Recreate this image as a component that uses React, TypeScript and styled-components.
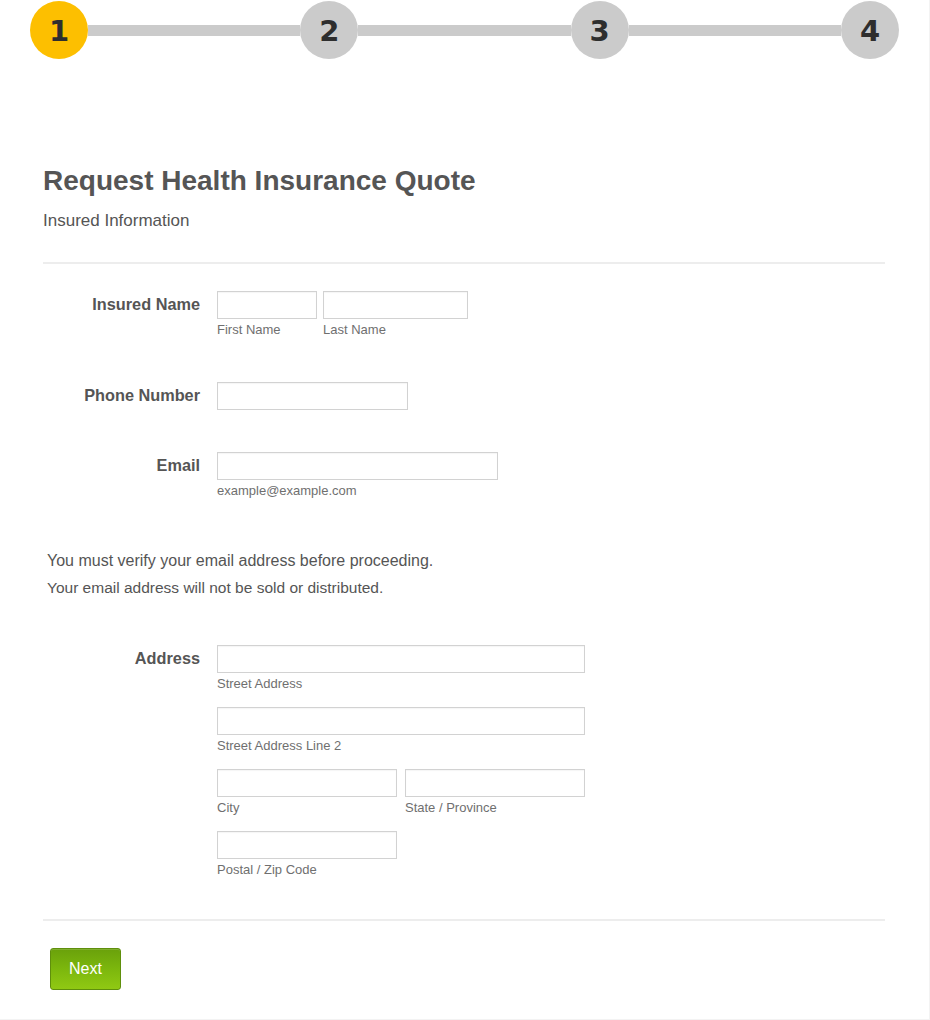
import React from "react";
import styled, { createGlobalStyle } from "styled-components";

const Global = createGlobalStyle`
  html, body { margin: 0; padding: 0; background: #fff; }
  body { font-family: "Liberation Sans", Arial, sans-serif; color: #555; }
  * { box-sizing: border-box; }
`;

const Page = styled.div`
  width: 930px;
  height: 1020px;
  border-right: 1px solid #f3f3f3;
  border-bottom: 1px solid #f3f3f3;
  background: #fff;
`;

const Steps = styled.div`
  display: flex;
  align-items: center;
  padding: 0 30px;
  height: 60px;
`;

const Circle = styled.div<{ $active?: boolean }>`
  width: 58px;
  height: 58px;
  border-radius: 50%;
  flex: none;
  background: ${(p) => (p.$active ? "#fdbf00" : "#cbcbcb")};
  color: #2e2e2e;
  display: flex;
  align-items: center;
  justify-content: center;
  font-family: "DejaVu Sans", Verdana, sans-serif;
  font-weight: bold;
  font-size: 29px;
  padding-top: 2px;
`;

const Connector = styled.div`
  flex: 1;
  height: 11px;
  background: #cbcbcb;
`;

const Form = styled.div`
  padding: 0 44px 0 43px;
`;

const Title = styled.h1`
  margin: 105px 0 0 0;
  font-size: 28px;
  line-height: 32px;
  font-weight: bold;
  color: #555;
`;

const Subtitle = styled.div`
  margin-top: 14px;
  font-size: 17px;
  line-height: 20px;
  color: #555;
`;

const Divider = styled.hr<{ $top: number }>`
  margin: ${(p) => p.$top}px 0 0 0;
  border: 0;
  border-top: 2px solid #ededed;
  height: 0;
`;

const Row = styled.div<{ $top: number }>`
  display: grid;
  grid-template-columns: 157px 1fr;
  column-gap: 17px;
  margin-top: ${(p) => p.$top}px;
`;

const Label = styled.div`
  text-align: right;
  font-weight: bold;
  font-size: 16.3px;
  line-height: 20px;
  padding-top: 3px;
  color: #555;
`;

const Fields = styled.div`
  display: flex;
  flex-direction: column;
  gap: 15px;
`;

const FieldLine = styled.div<{ $gap?: number }>`
  display: flex;
  gap: ${(p) => p.$gap ?? 8}px;
`;

const Field = styled.div`
  display: flex;
  flex-direction: column;
`;

const Input = styled.input<{ $w: number }>`
  width: ${(p) => p.$w}px;
  height: 28px;
  border: 1px solid #d2d2d2;
  box-shadow: inset 0 1px 1px rgba(0, 0, 0, 0.04);
  margin: 0;
  padding: 0 5px;
  font-family: inherit;
  font-size: 14px;
  background: #fff;
`;

const Sub = styled.span`
  margin-top: 3px;
  font-size: 13px;
  line-height: 16px;
  color: #6f6f6f;
`;

const Notice = styled.div`
  margin-top: 48px;
  padding-left: 4px;
`;

const NoticeLine = styled.p<{ $size: number }>`
  margin: 0;
  font-size: ${(p) => p.$size}px;
  line-height: 27px;
  color: #555;
`;

const Actions = styled.div`
  padding: 27px 0 0 7px;
`;

const Button = styled.button`
  width: 71px;
  height: 42px;
  border: 1px solid #5f8f0c;
  border-radius: 3px;
  background: linear-gradient(to bottom, #6aa10b 0%, #7cb70d 50%, #90c913 100%);
  color: #fff;
  font-family: "Liberation Sans", Arial, sans-serif;
  font-size: 16px;
  padding: 0;
  cursor: pointer;
  box-shadow: inset 0 1px 0 rgba(255, 255, 255, 0.15);
`;

export default function App() {
  return (
    <>
      <Global />
      <Page>
        <Steps>
          <Circle $active>1</Circle>
          <Connector />
          <Circle>2</Circle>
          <Connector />
          <Circle>3</Circle>
          <Connector />
          <Circle>4</Circle>
        </Steps>
        <Form>
          <Title>Request Health Insurance Quote</Title>
          <Subtitle>Insured Information</Subtitle>
          <Divider $top={31} />

          <Row $top={27}>
            <Label>Insured Name</Label>
            <FieldLine $gap={6}>
              <Field>
                <Input $w={100} />
                <Sub>First Name</Sub>
              </Field>
              <Field>
                <Input $w={145} />
                <Sub>Last Name</Sub>
              </Field>
            </FieldLine>
          </Row>

          <Row $top={44}>
            <Label>Phone Number</Label>
            <FieldLine>
              <Input $w={191} />
            </FieldLine>
          </Row>

          <Row $top={42}>
            <Label>Email</Label>
            <Field>
              <Input $w={281} />
              <Sub>example@example.com</Sub>
            </Field>
          </Row>

          <Notice>
            <NoticeLine $size={16}>You must verify your email address before proceeding.</NoticeLine>
            <NoticeLine $size={15.5}>Your email address will not be sold or distributed.</NoticeLine>
          </Notice>

          <Row $top={44}>
            <Label>Address</Label>
            <Fields>
              <Field>
                <Input $w={368} />
                <Sub>Street Address</Sub>
              </Field>
              <Field>
                <Input $w={368} />
                <Sub>Street Address Line 2</Sub>
              </Field>
              <FieldLine>
                <Field>
                  <Input $w={180} />
                  <Sub>City</Sub>
                </Field>
                <Field>
                  <Input $w={180} />
                  <Sub>State / Province</Sub>
                </Field>
              </FieldLine>
              <Field>
                <Input $w={180} />
                <Sub>Postal / Zip Code</Sub>
              </Field>
            </Fields>
          </Row>

          <Divider $top={41} />
          <Actions>
            <Button>Next</Button>
          </Actions>
        </Form>
      </Page>
    </>
  );
}
